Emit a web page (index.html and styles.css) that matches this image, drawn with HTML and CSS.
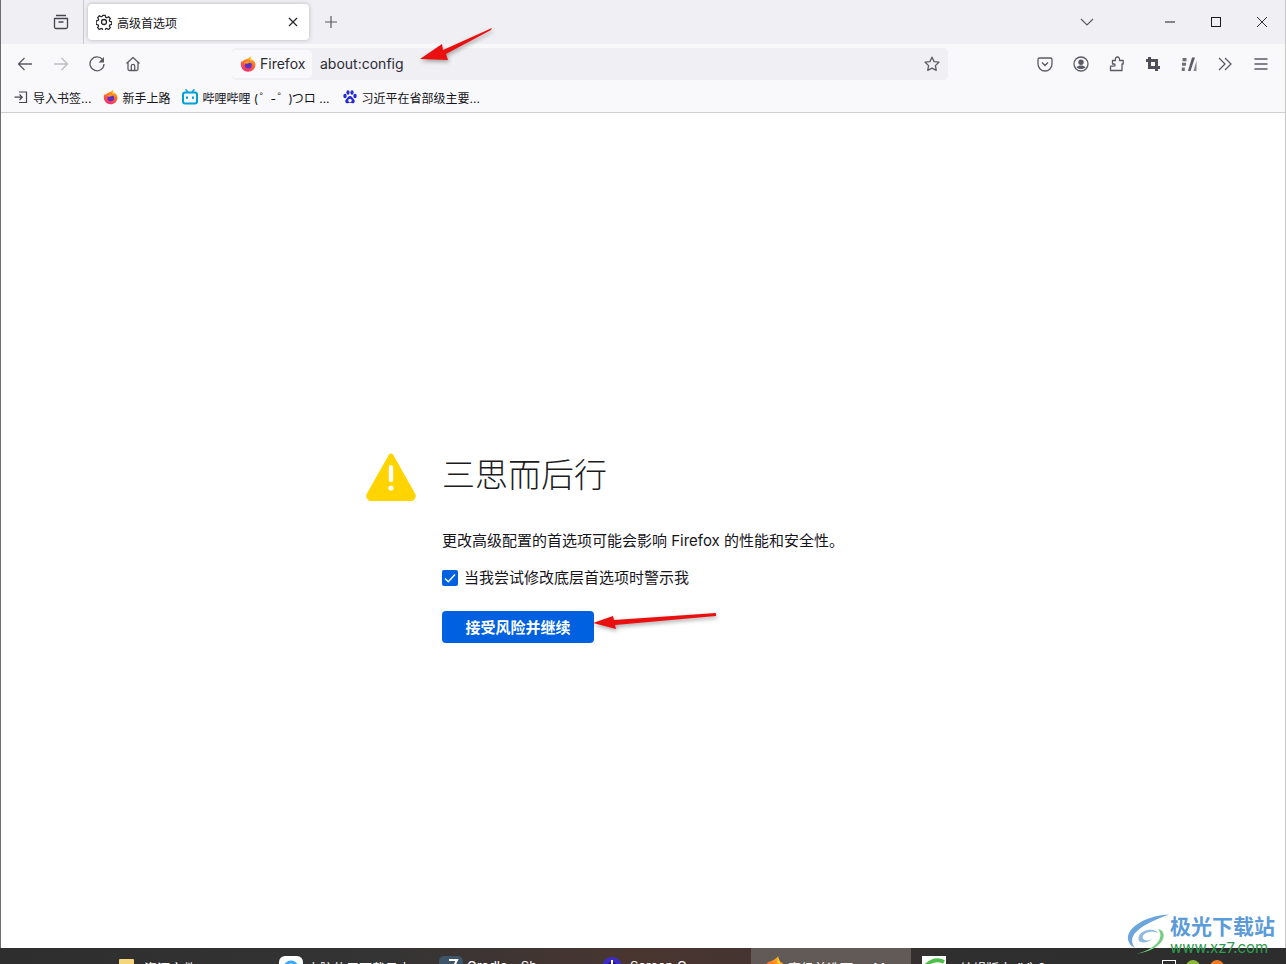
FILE: index.html
```html
<!DOCTYPE html>
<html lang="zh-CN">

<head>
    <meta charset="UTF-8">
    <meta name="viewport" content="width=device-width, initial-scale=1.0">
    <title>高级首选项</title>
    <link rel="stylesheet" href="styles.css">
</head>

<body>
    <svg class="defs" width="0" height="0">
        <defs>
            <linearGradient id="foxOuter" x1="0.7" y1="0" x2="0.3" y2="1">
                <stop offset="0" stop-color="#ffc21a" />
                <stop offset="0.45" stop-color="#ff6a2a" />
                <stop offset="1" stop-color="#f0287a" />
            </linearGradient>
            <symbol id="fox" viewBox="0 0 16 16">
                <path fill="url(#foxOuter)" d="M8 15.800A7.200 7.200 0 0 1 .8 8.600c0-1.600.5-3 1.400-4 .1.600.3 1 .6 1.300.4-1.100 1.200-1.900 2.300-2.300C6.800 3 9.200 2.200 10.600.2c.3 1 .2 1.900-.2 2.700 2.900.7 5 3 5 5.900 0 3.900-3.300 7-7.400 7z" />
                <circle cx="8.300" cy="9" r="3.500" fill="#5d2fc4" />
                <path fill="#ff9a1f" d="M3.800 7.200C5 5.500 7.200 4.700 9.300 5.300c1.400.4 2.500 1.400 3 2.700-.8-.9-1.900-1.300-3-1.200-.5.100-.9.300-1.100.700-1.400.4-3-.1-4.400-.3z" />
                <path fill="#ffd23a" d="M10.400 1.200c1.300 1.200 1.600 2.800 1 4.200-.4-.6-1-1-1.700-1.300.6-.8.900-1.800.7-2.900z" />
            </symbol>
        </defs>
    </svg>

    <div class="window">
        <div class="tab-bar">
            <div class="view-slot">
                <svg class="icon" viewBox="0 0 16 16" width="16" height="16">
                    <path d="M3 1.500h10M1.500 4.500h13v8.500a1.500 1.500 0 0 1-1.500 1.500H3A1.500 1.500 0 0 1 1.500 13z M5.500 8h5" fill="none" stroke="#45454f" stroke-width="1.300" />
                </svg>
            </div>
            <div class="tab">
                <svg class="icon" viewBox="0 0 16 16" width="16" height="16">
                    <path d="M6.700 1h2.600l.4 2 1.300.6 1.800-1.100 1.800 1.900-1 1.700.5 1.300 2 .5v2.600l-2 .4-.5 1.300 1 1.700-1.800 1.900-1.800-1.100-1.300.5-.4 2H6.700l-.4-2-1.300-.5-1.800 1.100-1.800-1.900 1-1.700-.5-1.300-2-.4V6.900l2-.5.5-1.300-1-1.700 1.800-1.900L5 2.600l1.300-.6z" transform="translate(.3 .3) scale(.96)" fill="none" stroke="#26262c" stroke-width="1.300" stroke-linejoin="round" />
                    <circle cx="8" cy="8" r="2.500" fill="none" stroke="#26262c" stroke-width="1.300" />
                </svg>
                <span class="tab-title">高级首选项</span>
                <svg class="tab-close" viewBox="0 0 10 10" width="10" height="10">
                    <path d="M1 1l8 8M9 1l-8 8" stroke="#26262c" stroke-width="1.200" />
                </svg>
            </div>
            <div class="new-tab">
                <svg viewBox="0 0 14 14" width="14" height="14">
                    <path d="M7 1v12M1 7h12" stroke="#5b5b66" stroke-width="1.200" />
                </svg>
            </div>
            <div class="tab-spacer"></div>
            <div class="tab-list">
                <svg viewBox="0 0 14 8" width="14" height="8">
                    <path d="M1 1l6 6 6-6" fill="none" stroke="#5b5b66" stroke-width="1.200" />
                </svg>
            </div>
            <div class="win-btn">
                <svg viewBox="0 0 12 12" width="12" height="12"><path d="M1 6h10" stroke="#1a1a1a" /></svg>
            </div>
            <div class="win-btn">
                <svg viewBox="0 0 12 12" width="12" height="12"><rect x="1.500" y="1.500" width="9" height="9" fill="none" stroke="#1a1a1a" /></svg>
            </div>
            <div class="win-btn">
                <svg viewBox="0 0 12 12" width="12" height="12"><path d="M1 1l10 10M11 1L1 11" stroke="#1a1a1a" stroke-width=".9" /></svg>
            </div>
        </div>

        <div class="nav-bar">
            <div class="nav-group">
                <div class="nav-btn">
                    <svg viewBox="0 0 16 16" width="16" height="16"><path d="M15 8H1.500M7.500 2l-6 6 6 6" fill="none" stroke="#5b5b66" stroke-width="1.300" /></svg>
                </div>
                <div class="nav-btn">
                    <svg viewBox="0 0 16 16" width="16" height="16"><path d="M1 8h13.500M8.500 2l6 6-6 6" fill="none" stroke="#bdbdc2" stroke-width="1.300" /></svg>
                </div>
                <div class="nav-btn">
                    <svg viewBox="0 0 16 16" width="16" height="16"><path d="M13.500 3.500A7 7 0 1 0 15 8" fill="none" stroke="#5b5b66" stroke-width="1.300" /><path d="M15 1v5.500H9.500z" fill="#5b5b66" /></svg>
                </div>
                <div class="nav-btn home-btn">
                    <svg viewBox="0 0 16 16" width="16" height="16"><path d="M1.500 7.500L8 1.500l6.500 6M3 6.500V13a1.500 1.500 0 0 0 1.500 1.500h7A1.500 1.500 0 0 0 13 13V6.500M6.300 14.500V10a1.700 1.700 0 0 1 3.400 0v4.500" fill="none" stroke="#5b5b66" stroke-width="1.300" stroke-linejoin="round" /></svg>
                </div>
            </div>

            <div class="url-bar">
                <div class="identity">
                    <svg width="16" height="16"><use href="#fox" /></svg>
                    <span class="url-label">Firefox</span>
                </div>
                <span class="url-text url-label">about:config</span>
                <svg class="star" viewBox="0 0 16 16" width="16" height="16">
                    <path d="M8 1.200l2.100 4.400 4.800.6-3.500 3.400.9 4.800L8 12.100l-4.300 2.300.9-4.800L1.100 6.200l4.800-.6z" fill="none" stroke="#5b5b66" stroke-width="1.300" stroke-linejoin="round" />
                </svg>
            </div>

            <div class="nav-group">
                <div class="nav-btn">
                    <svg viewBox="0 0 16 16" width="16" height="16"><path d="M2.500 2h11A1.500 1.500 0 0 1 15 3.500V8A7 7 0 0 1 1 8V3.500A1.500 1.500 0 0 1 2.500 2z M5 6.500l3 3 3-3" fill="none" stroke="#5b5b66" stroke-width="1.300" /></svg>
                </div>
                <div class="nav-btn">
                    <svg viewBox="0 0 16 16" width="16" height="16"><circle cx="8" cy="8" r="7" fill="none" stroke="#5b5b66" stroke-width="1.300" /><circle cx="8" cy="6.300" r="2.700" fill="#5b5b66" /><path d="M3.500 11.500c1-1.500 2.600-2 4.500-2s3.500.5 4.500 2c-1 .9-2.700 1.500-4.500 1.500s-3.500-.6-4.500-1.500z" fill="#5b5b66" /></svg>
                </div>
                <div class="nav-btn">
                    <svg viewBox="0 0 16 16" width="16" height="16"><path d="M1.500 10.200V14.500h11.500V8h1.200V4.500H10.500c.4-2 -.5-3.500-2-3.500s-2.600 1.400-2 3.500H3.500v3.500H5c1.500 0 1.500 2.200 0 2.200z" fill="none" stroke="#5b5b66" stroke-width="1.300" stroke-linejoin="round" /></svg>
                </div>
                <div class="nav-btn">
                    <svg viewBox="0 0 16 16" width="16" height="16"><path d="M4.500 1v10.500H15M1 4.500h10.500V15" fill="none" stroke="#4f4f59" stroke-width="3" /></svg>
                </div>
                <div class="nav-btn">
                    <svg viewBox="0 0 16 16" width="16" height="16"><path d="M1.500 2h4v3.200h-4zM1 6.800h4v3h-4zM.8 11.500h3V15h-3z" fill="#6d6d75" /><path d="M11 1.500h3l-4.500 13.500h-2.500z" fill="#5b5b66" /><path d="M15.500 4.500V15h-3z" fill="#85858c" /></svg>
                </div>
                <div class="nav-btn">
                    <svg viewBox="0 0 16 16" width="16" height="16"><path d="M2 2l6 6-6 6M8 2l6 6-6 6" fill="none" stroke="#5b5b66" stroke-width="1.300" /></svg>
                </div>
                <div class="nav-btn">
                    <svg viewBox="0 0 16 16" width="16" height="16"><path d="M1.500 3h13M1.500 8h13M1.500 13h13" fill="none" stroke="#5b5b66" stroke-width="1.300" /></svg>
                </div>
            </div>
        </div>

        <div class="bookmarks">
            <div class="bookmark import-mark">
                <svg viewBox="0 0 14 14" width="14" height="14"><path d="M5 2h7.500v10.500H5M.5 7.200h7.500M5.500 4.500L8.200 7.200 5.500 10" fill="none" stroke="#45454f" stroke-width="1.200" /></svg>
                <span>导入书签...</span>
            </div>
            <div class="bookmark">
                <svg width="15" height="16"><use href="#fox" /></svg>
                <span>新手上路</span>
            </div>
            <div class="bookmark">
                <svg viewBox="0 0 16 16" width="16" height="16"><path d="M4 .8l2.200 2.700M12 .8L9.800 3.500" stroke="#00a1d6" stroke-width="1.500" stroke-linecap="round" /><rect x="1" y="3.500" width="14" height="11" rx="2.200" fill="none" stroke="#00a1d6" stroke-width="2" /><path d="M5 7.500v2.200M11 7.500v2.200" stroke="#00a1d6" stroke-width="2" /></svg>
                <span>哔哩哔哩 <span class="kaomoji">( ゜- ゜)</span>つロ ...</span>
            </div>
            <div class="bookmark">
                <svg viewBox="0 0 16 16" width="16" height="16" fill="#2529d8"><ellipse cx="3" cy="7" rx="1.700" ry="2.200" /><ellipse cx="6" cy="3.500" rx="1.600" ry="2.200" /><ellipse cx="10" cy="3.500" rx="1.600" ry="2.200" /><ellipse cx="13" cy="7" rx="1.700" ry="2.200" /><path d="M8 7c-2 0-2.400 2-4 3.400-1.500 1.400-.6 4.100 1.800 3.800 1-.1 1.400-.4 2.200-.4s1.200.3 2.200.4c2.400.3 3.300-2.400 1.800-3.800C10.400 9 10 7 8 7z" /><circle cx="8" cy="11.500" r="1.700" fill="#fff" /></svg>
                <span>习近平在省部级主要...</span>
            </div>
        </div>

        <main class="content">
            <div class="warning">
                <svg class="warning-icon" viewBox="0 0 50 48" width="50" height="48">
                    <path d="M25 3L3 42a2.500 2.500 0 0 0 2.500 3.500h39A2.500 2.500 0 0 0 47 42z" fill="#ffd400" stroke="#ffd400" stroke-width="5" stroke-linejoin="round" />
                    <rect x="22.800" y="12" width="4.400" height="17" rx="2.200" fill="#fff" />
                    <circle cx="25" cy="35" r="2.600" fill="#fff" />
                </svg>
                <div class="warning-body">
                    <h1>三思而后行</h1>
                    <p>更改高级配置的首选项可能会影响 Firefox 的性能和安全性。</p>
                    <label class="check-row">
                        <span class="checkbox">
                            <svg viewBox="0 0 16 16" width="16" height="16"><path d="M3 8.500l3.300 3.300L13 4.500" fill="none" stroke="#fff" stroke-width="1.400" /></svg>
                        </span>
                        当我尝试修改底层首选项时警示我
                    </label>
                    <button class="accept">接受风险并继续</button>
                </div>
            </div>
        </main>

        <div class="taskbar">
            <div class="task task-folder">
                <span class="folder"></span>
                <span>资源文件</span>
            </div>
            <div class="task">
                <svg class="task-icon" viewBox="0 0 24 24" width="24" height="24"><rect width="24" height="24" rx="6" fill="#fff" /><circle cx="12" cy="12" r="6" fill="none" stroke="#35a7ff" stroke-width="3" /></svg>
                <span>电脑使用下载日志</span>
            </div>
            <div class="task">
                <svg class="task-icon" viewBox="0 0 24 24" width="24" height="24"><rect width="24" height="24" rx="5" fill="#3e5468" /><path d="M10 4h8l-3 6" fill="none" stroke="#fff" stroke-width="2" /></svg>
                <span>Gradle - Sh</span>
            </div>
            <div class="task task-screen">
                <svg class="task-icon" viewBox="0 0 20 24" width="20" height="24"><circle cx="10" cy="11" r="10" fill="#3b2cc9" /><circle cx="10" cy="11" r="5" fill="#1c0f4a" /><path d="M10 4v6" stroke="#fff" stroke-width="2" /></svg>
                <span>Screen C</span>
            </div>
            <div class="task active">
                <svg class="task-icon" width="26" height="26"><use href="#fox" /></svg>
                <span>高级首选项 — M</span>
            </div>
            <div class="task task-edit">
                <svg class="task-icon" viewBox="0 0 24 24" width="24" height="24"><rect width="24" height="24" fill="#fff" /><path d="M2 14C4 6 14 2 22 6" fill="none" stroke="#4fc04a" stroke-width="4" /><circle cx="12" cy="17" r="6" fill="#3b9ad9" /></svg>
                <span>编辑版本 (V) 2</span>
            </div>
            <div class="tray">
                <span class="tray-box"></span>
                <span class="tray-dot green"></span>
                <span class="tray-dot orange"></span>
                <span class="tray-text">小 英</span>
            </div>
        </div>

        <!-- annotations drawn on top of the screenshot -->
        <svg class="red-arrow arrow-top" viewBox="0 0 80 40" width="80" height="40">
            <path d="M2 33L24 18 25 24 74 2 73 4 28 28 30 34z" fill="#ea1010" />
        </svg>
        <svg class="red-arrow arrow-bottom" viewBox="0 0 130 24" width="130" height="24">
            <path d="M2 12L22 5 23 9 125 2 125 5 24 14 25 18z" fill="#ea1010" />
        </svg>

        <div class="watermark">
            <svg viewBox="0 0 46 40" width="46" height="40">
                <path d="M42 .5C26 1 8 8 2 19c-3 6 0 12 6 15-4-5-4-11 1-16C17 10 30 5 42 .5z" fill="#6aa5dc" />
                <path d="M12 27c-2-5 2-10 9-11 5-.7 9 .8 10 3-3-1.500-8-2-12 0-3 1.500-4 3.500-3 5.500 1.500 2.500 6 2.500 9 .5-3 3.500-11 4.500-13 2z" fill="#8fbbe3" />
                <path d="M31 15c5 1 7 5 5 10-3 7-13 13-27 15 12-3 22-9 24-16 1-4 0-6-2-9z" fill="#74cf82" />
            </svg>
            <div class="watermark-text">
                <span class="wm-cn">极光下载站</span>
                <span class="wm-url">www.xz7.com</span>
            </div>
        </div>
    </div>
</body>

</html>
```

FILE: styles.css
```css
* {
    margin: 0;
    padding: 0;
    box-sizing: border-box;
}

html,
body {
    height: 100%;
    overflow: hidden;
}

body {
    font-family: 'Inter', 'Noto Sans CJK SC', sans-serif;
    background-color: #fff;
    color: #15141a;
}

.defs {
    position: absolute;
}

.window {
    position: relative;
    height: 964px;
    display: flex;
    flex-direction: column;
    border-left: 1px solid #6e6e6e;
    border-right: 1px solid #c8c8c8;
}

svg {
    display: block;
    flex-shrink: 0;
}

/* tab strip */
.tab-bar {
    height: 44px;
    background-color: #f0f0f4;
    display: flex;
    align-items: center;
}

.view-slot {
    width: 83px;
    height: 44px;
    padding-left: 52px;
    display: flex;
    align-items: center;
    border-right: 1px solid #c9c9cd;
}

.tab {
    width: 221px;
    height: 36px;
    margin-left: 4px;
    padding: 0 11px 0 8px;
    background-color: #fff;
    border-radius: 4px;
    box-shadow: 0 0 4px rgba(0, 0, 0, 0.25);
    display: flex;
    align-items: center;
    font-size: 12px;
}

.tab-title {
    flex: 1;
    margin-left: 5px;
}

.new-tab {
    width: 44px;
    display: flex;
    justify-content: center;
}

.tab-spacer {
    flex: 1;
}

.tab-list {
    width: 60px;
    display: flex;
    justify-content: center;
    margin-right: 30px;
}

.win-btn {
    width: 46px;
    display: flex;
    justify-content: center;
}

/* toolbar */
.nav-bar {
    height: 40px;
    padding: 0 6px;
    background-color: #f9f9fb;
    display: flex;
    align-items: center;
}

.nav-group {
    display: flex;
}

.nav-btn {
    width: 36px;
    height: 32px;
    display: flex;
    align-items: center;
    justify-content: center;
}

.home-btn {
    padding-right: 1px;
}

.url-bar {
    width: 716px;
    height: 32px;
    margin: 0 79px 0 81px;
    background-color: #f0f0f4;
    border-radius: 4px;
    display: flex;
    align-items: center;
    font-size: 14px;
}

.url-label {
    padding-bottom: 2px;
}

.identity {
    width: 80px;
    height: 28px;
    background-color: #f9f9fb;
    border-radius: 4px;
    padding-left: 8px;
    display: flex;
    align-items: center;
    gap: 4px;
    color: #2b2a33;
}

.url-text {
    flex: 1;
    margin-left: 8px;
    color: #2b2a33;
}

.star {
    margin-right: 8px;
}

/* bookmarks */
.bookmarks {
    height: 29px;
    padding: 0 0 2px 13px;
    background-color: #f9f9fb;
    border-bottom: 1px solid #cfcfd3;
    display: flex;
    align-items: center;
    gap: 12px;
    font-size: 12px;
}

.bookmark {
    display: flex;
    align-items: center;
    gap: 4px;
}

.import-mark {
    gap: 5px;
}

.kaomoji {
    letter-spacing: -1px;
}

/* warning page */
.content {
    flex: 1;
    background-color: #fff;
    padding: 341px 0 0 365px;
}

.warning {
    display: flex;
    gap: 26px;
}

.warning-icon {
    margin-top: -1px;
}

h1 {
    font-size: 33px;
    font-weight: 300;
    line-height: 42px;
    color: #1c1b22;
}

.warning-body p {
    margin-top: 34px;
    font-size: 15px;
    line-height: 22px;
}

.check-row {
    margin-top: 15px;
    display: flex;
    align-items: center;
    gap: 6px;
    font-size: 15px;
    line-height: 22px;
}

.checkbox {
    width: 16px;
    height: 16px;
    background-color: #0061e0;
    border-radius: 2px;
}

.accept {
    margin-top: 22px;
    width: 152px;
    height: 32px;
    padding-bottom: 2px;
    background-color: #0061e0;
    color: #fff;
    border: none;
    border-radius: 4px;
    font-family: inherit;
    font-size: 15px;
    font-weight: 700;
}

/* desktop taskbar, cut off at the bottom of the capture */
.taskbar {
    height: 16px;
    margin: 0 -1px;
    padding-left: 111px;
    background: linear-gradient(90deg, #2e2e2e 0%, #343434 30%, #4a3631 50%, #433330 62%, #2f2f2f 75%, #2d2d2d 100%);
    display: flex;
    overflow: hidden;
    font-size: 13px;
    color: #fff;
}

.task {
    width: 160px;
    height: 40px;
    padding: 8px 0 0 8px;
    display: flex;
    gap: 4px;
    flex-shrink: 0;
}

.task span {
    padding-top: 2px;
}

.task.active {
    background-color: #625a57;
    padding-left: 10px;
    gap: 1px;
}

.task-folder {
    gap: 10px;
}

.task-screen {
    padding-left: 11px;
    gap: 8px;
}

.task-edit {
    padding-left: 11px;
    gap: 14px;
}

.folder {
    width: 15px;
    height: 24px;
    margin-top: 3px;
    background-color: #f5d67b;
    border-radius: 1px;
}

.tray {
    margin-left: 91px;
    padding-top: 12px;
    display: flex;
    gap: 10px;
}

.tray-box {
    width: 14px;
    height: 14px;
    border: 1px solid #fff;
    flex-shrink: 0;
}

.tray-dot {
    width: 14px;
    height: 14px;
    border-radius: 50%;
    flex-shrink: 0;
}

.tray-dot.green {
    background-color: #8cb83a;
}

.tray-dot.orange {
    background-color: #ee7b27;
}

.tray-text {
    margin-left: 8px;
    white-space: nowrap;
}

/* overlays */
.red-arrow {
    position: absolute;
    filter: drop-shadow(1px 2px 2px rgba(0, 0, 0, 0.35));
}

.arrow-top {
    left: 417px;
    top: 26px;
}

.arrow-bottom {
    left: 590px;
    top: 611px;
}

.watermark {
    position: absolute;
    left: 1126px;
    top: 914px;
    display: flex;
}

.watermark-text {
    display: flex;
    flex-direction: column;
    margin-left: -3px;
}

.wm-cn {
    font-size: 21px;
    line-height: 25px;
    font-weight: 700;
    color: #5b9bd8;
}

.wm-url {
    font-size: 15px;
    line-height: 18px;
    color: #2f9d4f;
}
```
